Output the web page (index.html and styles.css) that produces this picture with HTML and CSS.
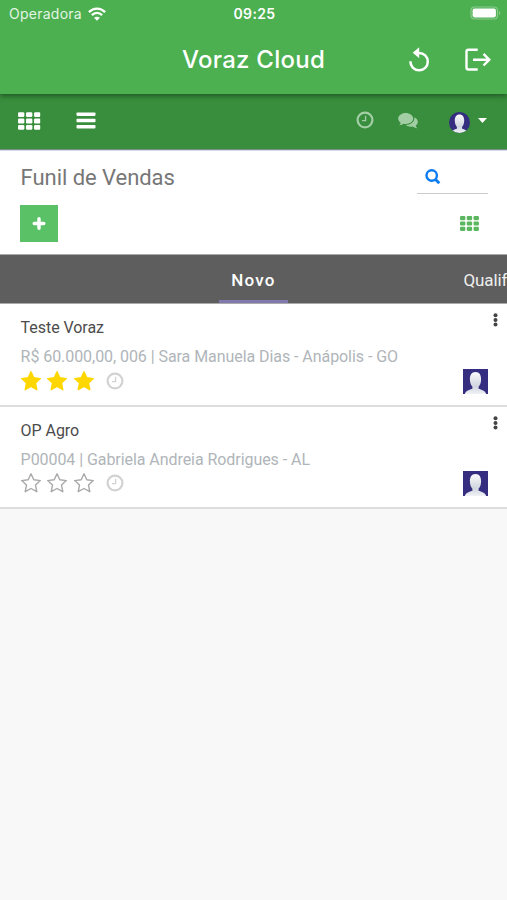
FILE: index.html
```html
<!DOCTYPE html>
<html lang="pt-BR">
<head>
<meta charset="utf-8">
<title>Voraz Cloud</title>
<link rel="stylesheet" href="styles.css">
</head>
<body>
<svg class="defs" width="0" height="0" aria-hidden="true">
  <defs>
    <linearGradient id="skin" x1="0" y1="0" x2="0" y2="1"><stop offset="0" stop-color="#fafafc"/><stop offset=".65" stop-color="#d0d5de"/><stop offset="1" stop-color="#f0f2f5"/></linearGradient>
    <symbol id="grid" viewBox="0 0 23 18">
      <g fill="currentColor"><rect width="6.5" height="5" rx="1.3"/><rect x="8.2" width="6.5" height="5" rx="1.3"/><rect x="16.4" width="6.5" height="5" rx="1.3"/><rect y="6.5" width="6.5" height="5" rx="1.3"/><rect x="8.2" y="6.5" width="6.5" height="5" rx="1.3"/><rect x="16.4" y="6.5" width="6.5" height="5" rx="1.3"/><rect y="13" width="6.5" height="5" rx="1.3"/><rect x="8.2" y="13" width="6.5" height="5" rx="1.3"/><rect x="16.4" y="13" width="6.5" height="5" rx="1.3"/></g>
    </symbol>
    <symbol id="clock" viewBox="0 0 18 18"><circle cx="9" cy="9" r="7.4" fill="none" stroke="currentColor" stroke-width="2.2"/><path d="M9.6 4.8V9.7H6" fill="none" stroke="currentColor" stroke-width="1.3"/></symbol>
    <symbol id="star" viewBox="0 0 20 20"><path d="M10 .8l2.8 6 6.5.8-4.8 4.5 1.3 6.6L10 15.5l-5.8 3.2 1.3-6.6L.7 7.6l6.5-.8z" stroke-linejoin="round"/></symbol>
    <symbol id="person" viewBox="0 0 25 25"><rect width="25" height="25" fill="#352d80"/><path d="M12.500 3C8.500 3 6.800 6 6.900 10.500c.1 3.500 1.200 5.800 2.500 7.300v2C6.500 20.800 3 21.500 1.800 25h21.400c-1.200-3.500-4.700-4.200-7.600-5.200v-2c1.300-1.500 2.400-3.800 2.500-7.300C18.200 6 16.500 3 12.500 3z" fill="url(#skin)"/></symbol>
    <symbol id="dots" viewBox="0 0 5 14"><g fill="#444"><circle cx="2.500" cy="2.200" r="2"/><circle cx="2.500" cy="6.900" r="2"/><circle cx="2.500" cy="11.600" r="2"/></g></symbol>
  </defs>
</svg>

<header class="app-header">
  <div class="status">
    <div class="carrier"><span>Operadora</span>
      <svg width="18" height="14" viewBox="0 0 18 14" fill="none" stroke="#fff" stroke-width="2.300"><path d="M.9 5.100C5.500.5 12.500.5 17.100 5.100M3.900 8.100c2.900-2.900 7.300-2.900 10.200 0"/><path d="M9 13.700 6.100 10.800c1.600-1.500 4.200-1.500 5.800 0z" fill="#fff" stroke="none"/></svg>
    </div>
    <span class="time">09:25</span>
    <svg class="battery" width="31" height="14" viewBox="0 0 31 14"><rect x="1" y="1" width="26.500" height="12" rx="3.500" fill="none" stroke="#8bcc8d" stroke-width="1.200"/><rect x="2.600" y="2.600" width="23.300" height="8.800" rx="1.800" fill="#fff"/><path d="M29 5v4c1.700-.8 1.700-3.200 0-4z" fill="#8bcc8d"/></svg>
  </div>
  <div class="titlebar">
    <h1>Voraz Cloud</h1>
    <div class="actions">
      <svg width="22" height="26" viewBox="408 46 22 26"><path d="M410.400 60.300A8.700 8.700 0 1 0 419 51.900h-2" fill="none" stroke="#fff" stroke-width="2.500"/><path d="M412.700 51.700 419.200 46.200V57.200z" fill="#fff"/></svg>
      <svg width="26" height="24" viewBox="465 48 26 24" fill="none" stroke="#fff" stroke-width="2.400"><path d="M477.700 49.700H468.500Q466.500 49.700 466.500 51.700V67.500Q466.500 69.500 468.500 69.500H477.700M473 59.700h16M483.500 53.900l5.800 5.800-5.800 5.800"/></svg>
    </div>
  </div>
</header>

<nav class="navbar">
  <svg class="apps" width="23" height="18"><use href="#grid"/></svg>
  <svg class="menu" width="20" height="17" viewBox="0 0 20 17" fill="#fff"><rect x=".5" y=".5" width="19" height="3.400" rx=".8"/><rect x=".5" y="6.800" width="19" height="3.400" rx=".8"/><rect x=".5" y="13" width="19" height="3.400" rx=".8"/></svg>
  <div class="systray">
    <svg class="activity" width="18" height="18"><use href="#clock"/></svg>
    <svg class="chat" width="20" height="16" viewBox="0 0 20 16" fill="currentColor"><path d="M7.700 0C3.500 0 .2 2.500.2 5.600c0 1.700 1 3.200 2.600 4.300-.3 1-1 1.700-1.600 2.400 1.800-.1 3.200-.7 4.400-1.500 5.200.9 9.600-1.500 9.600-5.200C15.200 2.500 11.900 0 7.700 0z"/><path d="M16.400 4.200c.6 4.300-3.200 7.700-8.600 7.900 1.700 1.400 4.200 2 6.800 1.500 1.200.9 2.700 1.500 4.600 1.600-.7-.7-1.300-1.400-1.600-2.400 3.200-2.200 3-6.700-1.200-8.600z"/></svg>
    <svg class="user" width="21" height="21"><use href="#person"/></svg>
    <svg class="caret" width="9" height="5" viewBox="0 0 9 5"><path d="M0 0h9L4.500 5z" fill="#fff"/></svg>
  </div>
</nav>

<section class="control">
  <div class="row">
    <h2>Funil de Vendas</h2>
    <div class="search"><svg width="16" height="16" viewBox="0 0 16 16" fill="none" stroke="#0b7cf2" stroke-width="2.400"><circle cx="6.700" cy="6.500" r="5.200"/><path d="M10.300 10.200 14.300 14.200" stroke-width="2.900"/></svg></div>
  </div>
  <div class="row">
    <button class="add" aria-label="Criar"><svg width="14" height="14" viewBox="0 0 14 14"><path d="M7 1.700v9.600M2.200 6.500h9.600" stroke="#fff" stroke-width="3.400" stroke-linecap="round"/></svg></button>
    <svg class="view" width="19" height="15"><use href="#grid"/></svg>
  </div>
</section>

<div class="tabs"><div class="tab active"><span>Novo</span></div><div class="tab next"><span>Qualificado</span></div></div>

<main>
  <article class="card">
    <h3>Teste Voraz</h3>
    <svg class="more" width="5" height="14"><use href="#dots"/></svg>
    <p>R$ 60.000,00, 006 | Sara Manuela Dias - Anápolis - GO</p>
    <div class="foot">
      <svg class="star on" width="20" height="20"><use href="#star"/></svg><svg class="star on" width="20" height="20"><use href="#star"/></svg><svg class="star on" width="20" height="20"><use href="#star"/></svg>
      <svg class="clock" width="18" height="18"><use href="#clock"/></svg>
      <svg class="owner" width="25" height="25"><use href="#person"/></svg>
    </div>
  </article>
  <article class="card">
    <h3>OP Agro</h3>
    <svg class="more" width="5" height="14"><use href="#dots"/></svg>
    <p>P00004 | Gabriela Andreia Rodrigues - AL</p>
    <div class="foot">
      <svg class="star" width="20" height="20"><use href="#star"/></svg><svg class="star" width="20" height="20"><use href="#star"/></svg><svg class="star" width="20" height="20"><use href="#star"/></svg>
      <svg class="clock" width="18" height="18"><use href="#clock"/></svg>
      <svg class="owner" width="25" height="25"><use href="#person"/></svg>
    </div>
  </article>
</main>
</body>
</html>
```
FILE: styles.css
```css
* { box-sizing: border-box; }
body { margin: 0; height: 900px; overflow: hidden; background: #f8f8f8; font-family: Roboto, sans-serif; }
h1, h2, h3, p { margin: 0; font-weight: 400; white-space: nowrap; }
svg { display: block; flex: none; }
.defs { position: absolute; }

.app-header { position: relative; height: 94px; background: #4caf50; color: #fff; font-family: Inter, sans-serif; box-shadow: 0 2px 5px rgba(0, 0, 0, .4); }
.status { display: grid; grid-template-columns: 1fr auto 1fr; align-items: center; height: 27px; padding: 0 6px 0 9px; }
.carrier { display: flex; align-items: center; gap: 6px; font-size: 14px; letter-spacing: .25px; color: #e3f5e3; }
.time { margin-left: -1px; font-size: 14px; font-weight: 600; letter-spacing: .35px; }
.battery { justify-self: end; margin-top: -1px; }
.titlebar { display: grid; grid-template-columns: 1fr auto 1fr; align-items: center; height: 65px; padding: 0 16px; }
h1 { grid-column: 2; font-size: 24px; font-weight: 500; line-height: 30px; letter-spacing: .25px; }
.actions { display: flex; justify-content: flex-end; align-items: center; gap: 35px; }

.navbar { display: flex; align-items: center; height: 56px; padding: 0 20px 2px 18px; background: #388e3c; border-bottom: 1px solid #78918c; color: #fff; }
.apps { width: 22.500px; margin-right: .5px; }
.menu { margin-left: 35px; }
.systray { display: flex; align-items: center; margin-left: auto; color: #a3cea5; }
.activity { margin-top: -2px; }
.chat { margin-left: 24px; }
.user { margin: 4px 0 0 31px; border-radius: 50%; }
.caret { margin-left: 8px; }

.control { height: 104px; padding: 8px 19px 0 20px; background: #fff; border-top: 1px solid #d5d8e5; }
.row { display: flex; justify-content: space-between; align-items: flex-start; }
.row + .row { align-items: center; margin-top: 11px; }
h2 { height: 35px; padding-left: .6px; font-size: 22px; line-height: 38px; color: #777; letter-spacing: -.05px; }
.search { width: 71px; height: 35px; padding: 10px 8px; border-bottom: 1px solid #ccc; }
.add { display: grid; place-items: center; width: 37.500px; height: 37px; margin-left: .3px; padding: 0; border: 0; background: #5bc166; }
.view { margin-right: 9px; color: #5bb75f; }

.tabs { display: flex; height: 50px; padding-left: 219px; overflow: hidden; background: #5e5e5e; border-top: 1px solid #aaa; border-bottom: 1px solid #aaa; color: #fff; line-height: 50px; }
.tab { flex: none; }
.active { width: 69px; border-bottom: 3px solid #8179ad; text-align: center; font-size: 17px; font-weight: 500; letter-spacing: 1.2px; }
.next { margin-left: 175.500px; font-size: 17px; letter-spacing: -.1px; color: #eee; }

.card { display: grid; grid-template-columns: 1fr auto; grid-template-rows: 38px 28px 1fr; height: 102.500px; padding: 0 9.500px 0 20.600px; background: #fff; border-bottom: 2px solid #ddd; }
h3 { font-size: 16px; line-height: 48px; color: #4c4c4c; letter-spacing: -.05px; }
.more { margin-top: 9px; }
.card p { grid-column: 1 / -1; font-size: 16px; line-height: 30px; letter-spacing: -.06px; color: #b0b5b9; }
.foot { grid-column: 1 / -1; display: flex; align-items: flex-start; gap: 6.500px; padding-right: 9.500px; }
.star { margin-top: .5px; fill: none; stroke: #a8a8a8; stroke-width: 1.400; }
.star.on { fill: #ffd700; stroke: #ffd700; }
.clock { margin: 1.500px 0 0 6.400px; color: #d2d2d2; }
.owner { margin: -1.500px 0 0 auto; }
```
